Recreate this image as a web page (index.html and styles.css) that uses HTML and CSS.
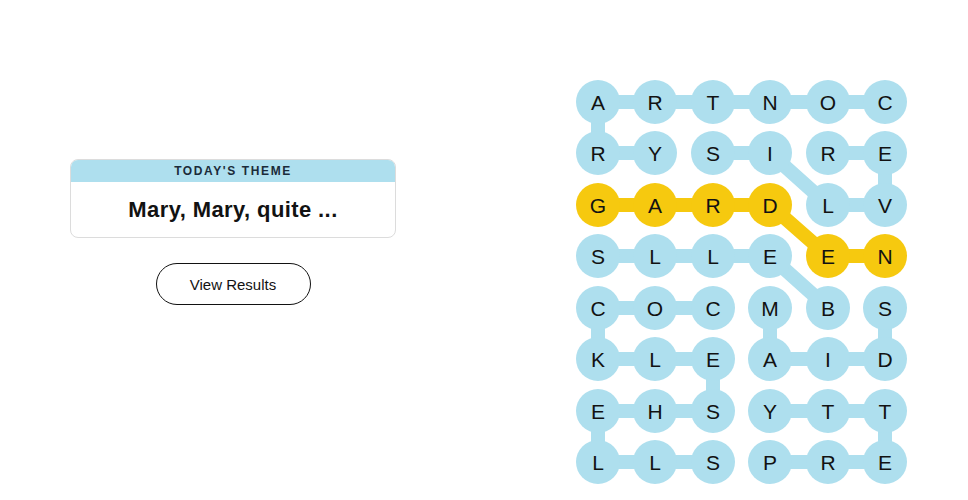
FILE: index.html
```html
<!DOCTYPE html>
<html lang="en">
<head>
	<meta charset="UTF-8">
	<title>Strands</title>
	<link rel="stylesheet" href="styles.css">
</head>
<body>
	<main class="game">
		<section class="side">
			<div class="theme">
				<div class="theme-head">TODAY'S THEME</div>
				<div class="theme-body">Mary, Mary, quite ...</div>
			</div>
			<button class="results" type="button">View Results</button>
		</section>

		<section class="board">
			<svg width="332" height="406" viewBox="0 0 332 406">
				<!-- found words -->
				<g class="links">
					<polyline points="309,22 22,22 22,73 79,73"/>
					<polyline points="137,73 194,73 252,125 309,125 309,73 252,73"/>
					<polyline points="252,228 194,176 22,176"/>
					<polyline points="137,228 22,228 22,279 137,279 137,331 22,331 22,382 137,382"/>
					<polyline points="194,228 194,279 309,279 309,228"/>
					<polyline points="194,382 309,382 309,331 194,331"/>
				</g>
				<g class="links span">
					<polyline points="22,125 194,125 252,176 309,176"/>
				</g>

				<!-- row 1 -->
				<g class="cell"><circle cx="22" cy="22" r="22"/><text x="22" y="30">A</text></g>
				<g class="cell"><circle cx="79" cy="22" r="22"/><text x="79" y="30">R</text></g>
				<g class="cell"><circle cx="137" cy="22" r="22"/><text x="137" y="30">T</text></g>
				<g class="cell"><circle cx="194" cy="22" r="22"/><text x="194" y="30">N</text></g>
				<g class="cell"><circle cx="252" cy="22" r="22"/><text x="252" y="30">O</text></g>
				<g class="cell"><circle cx="309" cy="22" r="22"/><text x="309" y="30">C</text></g>
				<!-- row 2 -->
				<g class="cell"><circle cx="22" cy="73" r="22"/><text x="22" y="81">R</text></g>
				<g class="cell"><circle cx="79" cy="73" r="22"/><text x="79" y="81">Y</text></g>
				<g class="cell"><circle cx="137" cy="73" r="22"/><text x="137" y="81">S</text></g>
				<g class="cell"><circle cx="194" cy="73" r="22"/><text x="194" y="81">I</text></g>
				<g class="cell"><circle cx="252" cy="73" r="22"/><text x="252" y="81">R</text></g>
				<g class="cell"><circle cx="309" cy="73" r="22"/><text x="309" y="81">E</text></g>
				<!-- row 3 -->
				<g class="cell span"><circle cx="22" cy="125" r="22"/><text x="22" y="133">G</text></g>
				<g class="cell span"><circle cx="79" cy="125" r="22"/><text x="79" y="133">A</text></g>
				<g class="cell span"><circle cx="137" cy="125" r="22"/><text x="137" y="133">R</text></g>
				<g class="cell span"><circle cx="194" cy="125" r="22"/><text x="194" y="133">D</text></g>
				<g class="cell"><circle cx="252" cy="125" r="22"/><text x="252" y="133">L</text></g>
				<g class="cell"><circle cx="309" cy="125" r="22"/><text x="309" y="133">V</text></g>
				<!-- row 4 -->
				<g class="cell"><circle cx="22" cy="176" r="22"/><text x="22" y="184">S</text></g>
				<g class="cell"><circle cx="79" cy="176" r="22"/><text x="79" y="184">L</text></g>
				<g class="cell"><circle cx="137" cy="176" r="22"/><text x="137" y="184">L</text></g>
				<g class="cell"><circle cx="194" cy="176" r="22"/><text x="194" y="184">E</text></g>
				<g class="cell span"><circle cx="252" cy="176" r="22"/><text x="252" y="184">E</text></g>
				<g class="cell span"><circle cx="309" cy="176" r="22"/><text x="309" y="184">N</text></g>
				<!-- row 5 -->
				<g class="cell"><circle cx="22" cy="228" r="22"/><text x="22" y="236">C</text></g>
				<g class="cell"><circle cx="79" cy="228" r="22"/><text x="79" y="236">O</text></g>
				<g class="cell"><circle cx="137" cy="228" r="22"/><text x="137" y="236">C</text></g>
				<g class="cell"><circle cx="194" cy="228" r="22"/><text x="194" y="236">M</text></g>
				<g class="cell"><circle cx="252" cy="228" r="22"/><text x="252" y="236">B</text></g>
				<g class="cell"><circle cx="309" cy="228" r="22"/><text x="309" y="236">S</text></g>
				<!-- row 6 -->
				<g class="cell"><circle cx="22" cy="279" r="22"/><text x="22" y="287">K</text></g>
				<g class="cell"><circle cx="79" cy="279" r="22"/><text x="79" y="287">L</text></g>
				<g class="cell"><circle cx="137" cy="279" r="22"/><text x="137" y="287">E</text></g>
				<g class="cell"><circle cx="194" cy="279" r="22"/><text x="194" y="287">A</text></g>
				<g class="cell"><circle cx="252" cy="279" r="22"/><text x="252" y="287">I</text></g>
				<g class="cell"><circle cx="309" cy="279" r="22"/><text x="309" y="287">D</text></g>
				<!-- row 7 -->
				<g class="cell"><circle cx="22" cy="331" r="22"/><text x="22" y="339">E</text></g>
				<g class="cell"><circle cx="79" cy="331" r="22"/><text x="79" y="339">H</text></g>
				<g class="cell"><circle cx="137" cy="331" r="22"/><text x="137" y="339">S</text></g>
				<g class="cell"><circle cx="194" cy="331" r="22"/><text x="194" y="339">Y</text></g>
				<g class="cell"><circle cx="252" cy="331" r="22"/><text x="252" y="339">T</text></g>
				<g class="cell"><circle cx="309" cy="331" r="22"/><text x="309" y="339">T</text></g>
				<!-- row 8 -->
				<g class="cell"><circle cx="22" cy="382" r="22"/><text x="22" y="390">L</text></g>
				<g class="cell"><circle cx="79" cy="382" r="22"/><text x="79" y="390">L</text></g>
				<g class="cell"><circle cx="137" cy="382" r="22"/><text x="137" y="390">S</text></g>
				<g class="cell"><circle cx="194" cy="382" r="22"/><text x="194" y="390">P</text></g>
				<g class="cell"><circle cx="252" cy="382" r="22"/><text x="252" y="390">R</text></g>
				<g class="cell"><circle cx="309" cy="382" r="22"/><text x="309" y="390">E</text></g>
			</svg>
		</section>
	</main>
</body>
</html>
```
FILE: styles.css
```css
html,body{margin:0;padding:0;background:#fff;}
body{font-family:"Liberation Sans",Arial,sans-serif;color:#121212;}

.game{display:flex;justify-content:space-between;padding:80px 60px 0 70px;}

.side{width:326px;padding-top:79px;display:flex;flex-direction:column;align-items:center;}

.theme{width:100%;box-sizing:border-box;border:1px solid #dcdcdc;border-radius:8px;overflow:hidden;background:#fff;}
.theme-head{height:22px;line-height:23px;background:#aedfee;text-align:center;font-size:12px;font-weight:700;letter-spacing:1.6px;color:#1b2b3a;}
.theme-body{height:55px;line-height:55px;text-align:center;font-size:22px;font-weight:700;letter-spacing:0.4px;color:#121212;}

.results{margin-top:25px;width:155px;height:42px;border:1px solid #121212;border-radius:21px;background:#fff;font-family:"Liberation Sans",Arial,sans-serif;font-size:15px;color:#121212;cursor:pointer;}

.board svg{display:block;}
.links polyline{fill:none;stroke:#aedfee;stroke-width:14;stroke-linejoin:round;stroke-linecap:round;}
.links.span polyline{stroke:#f6c90f;}
.cell circle{fill:#aedfee;}
.cell.span circle{fill:#f6c90f;}
.cell text{font-family:"Liberation Sans",Arial,sans-serif;font-size:21px;fill:#121212;text-anchor:middle;}
```
